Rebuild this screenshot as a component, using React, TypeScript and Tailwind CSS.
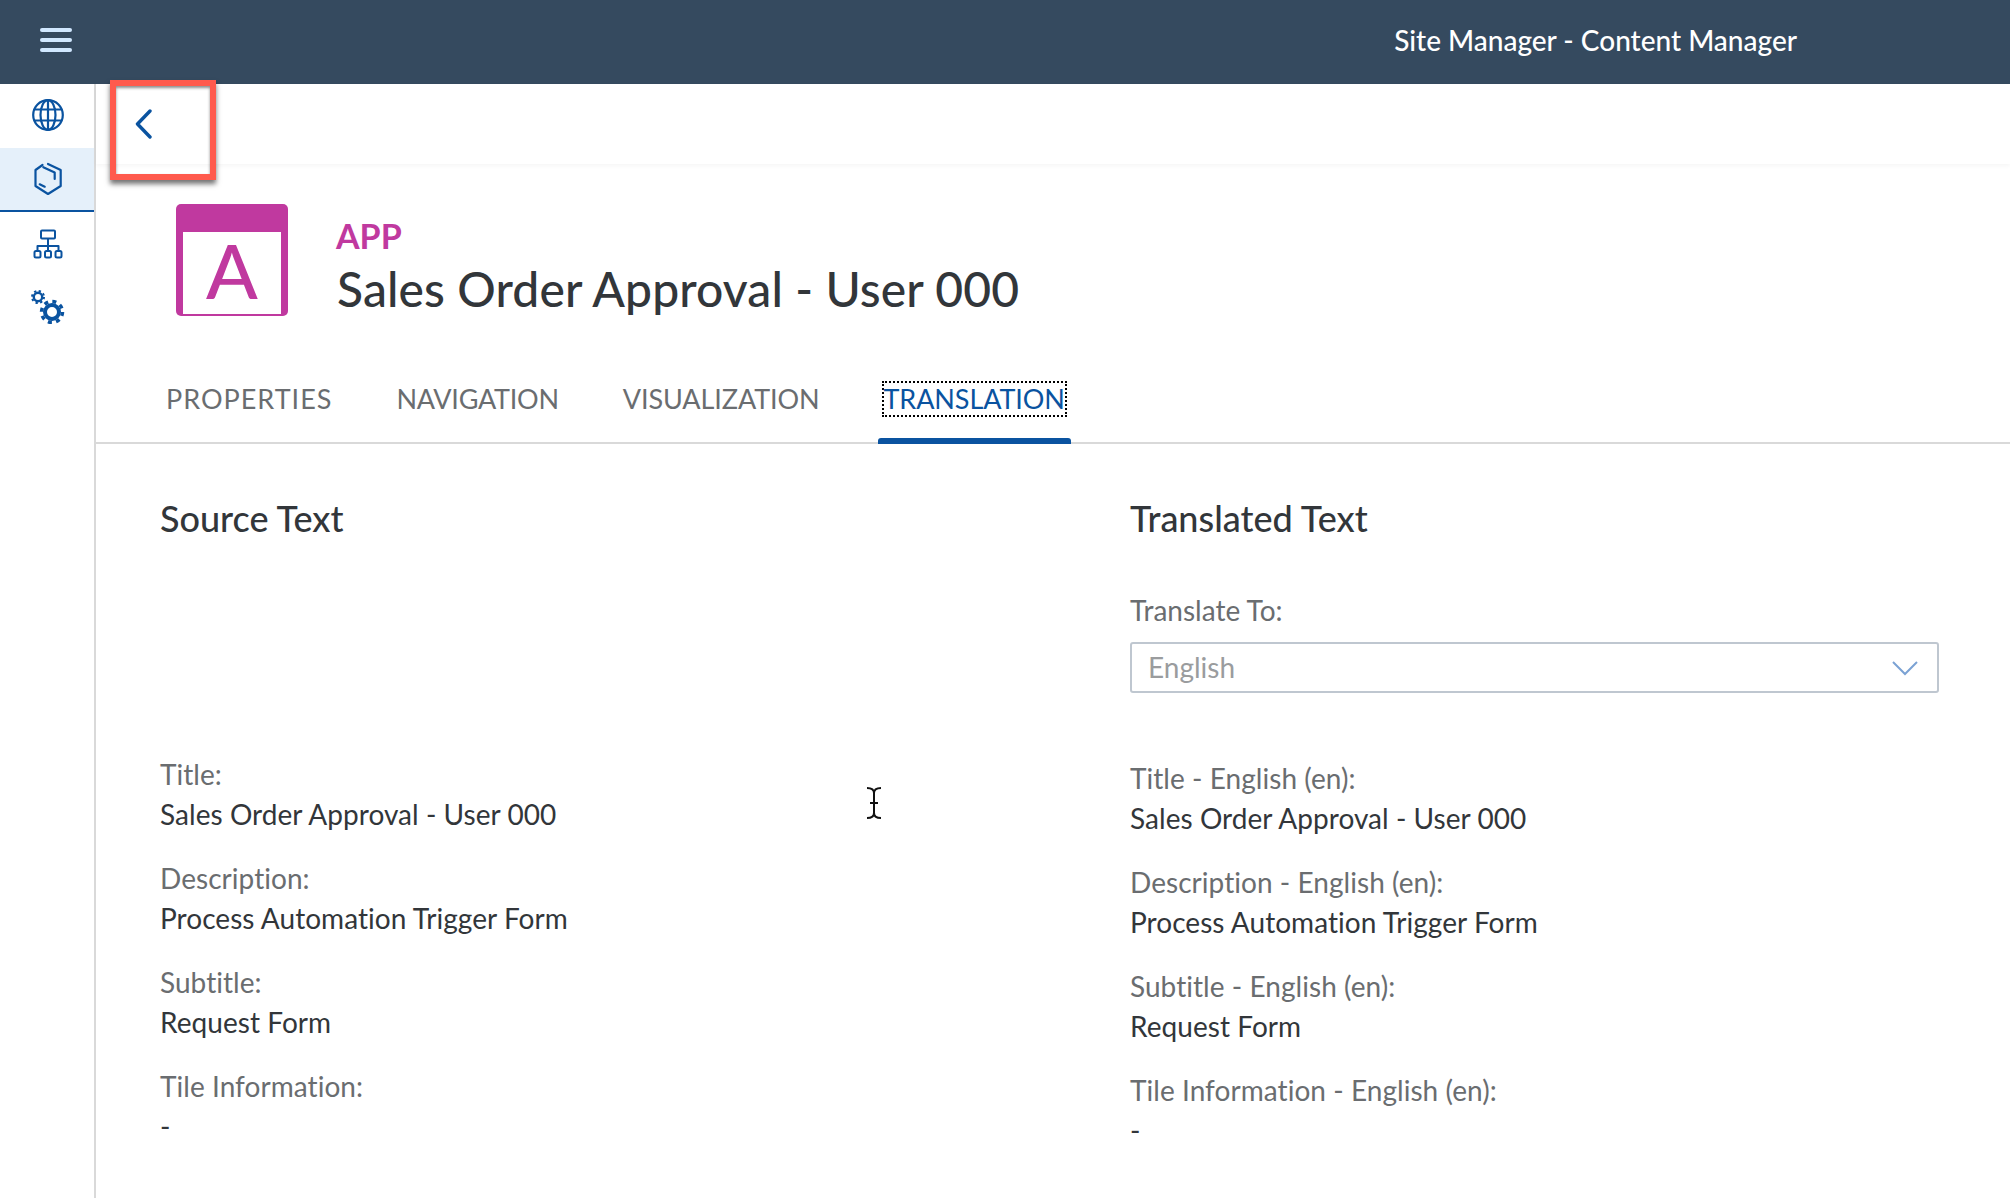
import React from "react";

const BLUE = "#0a53a0";

function GlobeIcon() {
  return (
    <svg width="34" height="34" viewBox="0 0 34 34" fill="none" stroke={BLUE} strokeWidth="2.2">
      <circle cx="17" cy="17" r="14.8" />
      <ellipse cx="17" cy="17" rx="7.5" ry="14.8" />
      <path d="M17 2v30M3.5 11.5h27M3.5 22.5h27" />
    </svg>
  );
}

function BoxIcon() {
  return (
    <svg width="30" height="34" viewBox="0 0 30 34" fill="none" stroke={BLUE} strokeWidth="2.2" strokeLinecap="round" strokeLinejoin="round">
      <path d="M8.5 3 1.5 8v16L14 32l12.7-8V8L14 2" />
      <path d="M9.3 5.2 20.7 10.5V17" />
      <path d="M5.7 22.3l5 2.4" />
    </svg>
  );
}

function SitemapIcon() {
  return (
    <svg width="30" height="30" viewBox="0 0 30 30" fill="none" stroke={BLUE} strokeWidth="2" strokeLinejoin="round">
      <rect x="8" y="1.5" width="14" height="8" rx="1" />
      <path d="M15 9.5v13M4.5 22v-5h21v5" />
      <rect x="1.5" y="22" width="6" height="6.5" rx="1.5" />
      <rect x="12" y="22" width="6" height="6.5" rx="1.5" />
      <rect x="22.5" y="22" width="6" height="6.5" rx="1.5" />
    </svg>
  );
}

function GearsIcon() {
  return (
    <svg width="34" height="34" viewBox="0 0 34 34" fill="none" stroke={BLUE}>
      <circle cx="7" cy="7" r="4.2" strokeWidth="2.4" />
      <circle cx="7" cy="7" r="6" strokeWidth="2" strokeDasharray="2.3 2.41" />
      <circle cx="21" cy="22" r="7" strokeWidth="4" />
      <circle cx="21" cy="22" r="10.5" strokeWidth="3.5" strokeDasharray="4 4.25" />
    </svg>
  );
}

function Field({ label, value }: { label: string; value: string }) {
  return (
    <div className="mb-[24px]">
      <div className="h-[40px] text-[28px] leading-[40px] tracking-[0.05px] text-[#6a6d70]">{label}</div>
      <div className="h-[40px] text-[28px] leading-[40px] tracking-[0.05px] text-[#32363a]">{value}</div>
    </div>
  );
}

export default function App() {
  const source = [
    ["Title:", "Sales Order Approval - User 000"],
    ["Description:", "Process Automation Trigger Form"],
    ["Subtitle:", "Request Form"],
    ["Tile Information:", "-"],
  ];
  const translated = [
    ["Title - English (en):", "Sales Order Approval - User 000"],
    ["Description - English (en):", "Process Automation Trigger Form"],
    ["Subtitle - English (en):", "Request Form"],
    ["Tile Information - English (en):", "-"],
  ];

  return (
    <div className="relative h-[1198px] w-[2010px] overflow-hidden bg-white font-['Lato',sans-serif] [font-variant-ligatures:none]">
      <header className="flex h-[84px] items-center justify-between bg-[#354a5f] pb-[4px] pl-[40px] pr-[213px]">
        <div className="flex w-[32px] flex-col gap-[6px]">
          <span className="h-[4px] rounded-full bg-[#d1e8ff]" />
          <span className="h-[4px] rounded-full bg-[#d1e8ff]" />
          <span className="h-[4px] rounded-full bg-[#d1e8ff]" />
        </div>
        <div className="text-[28px] font-medium text-white">Site Manager - Content Manager</div>
      </header>

      <div className="flex h-[1114px]">
        <aside className="w-[96px] shrink-0 border-r-2 border-[#d9d9d9]">
          <div className="flex h-[64px] items-center justify-center pb-[2px] pl-[2px]"><GlobeIcon /></div>
          <div className="flex h-[64px] items-center justify-center border-b-2 border-[#0a53a0] bg-[#e5f0fa] pl-[4px]"><BoxIcon /></div>
          <div className="flex h-[64px] items-center justify-center pl-[2px]"><SitemapIcon /></div>
          <div className="flex h-[64px] items-center justify-center pb-[3px] pl-[2px]"><GearsIcon /></div>
        </aside>

        <main className="min-w-0 flex-1">
          <div className="flex h-[80px] items-center pl-[39px] shadow-[0_2px_4px_rgba(0,0,0,0.04)]">
            <svg width="18" height="30" viewBox="0 0 18 30" fill="none" stroke={BLUE} strokeWidth="3.4" strokeLinecap="round" strokeLinejoin="round">
              <path d="M15 2 2.5 15 15 28" />
            </svg>
          </div>

          <div className="flex items-start pl-[80px] pt-[40px]">
            <div className="flex h-[112px] w-[112px] shrink-0 flex-col rounded-[5px] bg-[#c0399f] px-[7px] pb-[7px] pt-[28px]">
              <div className="flex flex-1 items-center justify-center bg-white pb-[6px] text-[76px] font-medium leading-none text-[#c0399f]">A</div>
            </div>
            <div className="ml-[48px]">
              <div className="pt-[12px] text-[34px] font-bold leading-[40px] text-[#c0399f]">APP</div>
              <h1 className="pl-[1px] pt-[2px] text-[48px] font-medium leading-[62px] tracking-[0.12px] text-[#32363a]">Sales Order Approval - User 000</h1>
            </div>
          </div>

          <nav className="mt-[41px] flex h-[83px] border-b-2 border-[#d9d9d9] pl-[70px] text-[27px] leading-[40px] text-[#6a6d70]">
            <div className="mr-[64px] pt-[18px] tracking-[1px]">PROPERTIES</div>
            <div className="mr-[64px] pt-[18px] tracking-[-0.25px]">NAVIGATION</div>
            <div className="mr-[62px] pt-[18px] tracking-[-0.1px]">VISUALIZATION</div>
            <div className="relative h-[83px] pt-[20px]">
              <div className="border-2 border-dotted border-black leading-[32px] tracking-[-0.1px] text-[#0a53a0]">TRANSLATION</div>
              <div className="absolute inset-x-[-4px] bottom-0 h-[6px] rounded-t-[3px] bg-[#0a53a0]" />
            </div>
          </nav>

          <div className="grid grid-cols-[970px_1fr] pl-[64px] pt-[50px]">
            <section>
              <h2 className="text-[36px] font-medium leading-[48px] text-[#32363a]">Source Text</h2>
              <div className="mt-[212px]">
                {source.map(([l, v]) => <Field key={l} label={l} value={v} />)}
              </div>
            </section>
            <section>
              <h2 className="text-[36px] font-medium leading-[48px] text-[#32363a]">Translated Text</h2>
              <div className="mt-[48px] h-[40px] text-[28px] leading-[40px] text-[#6a6d70]">Translate To:</div>
              <div className="mt-[12px] flex h-[51px] w-[809px] items-center justify-between rounded-[3px] border-2 border-[#bfc7d0] pl-[16px] pr-[19px]">
                <span className="pb-[1px] text-[28px] leading-[40px] text-[#9a9c9e]">English</span>
                <svg width="26" height="16" viewBox="0 0 26 16" fill="none" stroke="#7ba2d4" strokeWidth="2"><path d="M1 2l12 12L25 2" /></svg>
              </div>
              <div className="mt-[65px]">
                {translated.map(([l, v]) => <Field key={l} label={l} value={v} />)}
              </div>
            </section>
          </div>
        </main>
      </div>

      {/* annotation box from the screenshot */}
      <div className="absolute left-[110px] top-[80px] h-[100px] w-[106px] border-[6px] border-[#ff5a4d] shadow-[0_4px_5px_rgba(0,0,0,0.55),inset_0_2px_3px_rgba(0,0,0,0.45)]" />

      {/* text cursor */}
      <svg className="absolute left-[864px] top-[785px]" width="20" height="36" viewBox="0 0 20 36" fill="none" stroke="#111" strokeWidth="2">
        <path d="M3 3c4 0 7 1 7 5v20c0 4-3 5-7 5M17 3c-4 0-7 1-7 5v20c0 4 3 5 7 5M6 18h8" />
      </svg>
    </div>
  );
}
